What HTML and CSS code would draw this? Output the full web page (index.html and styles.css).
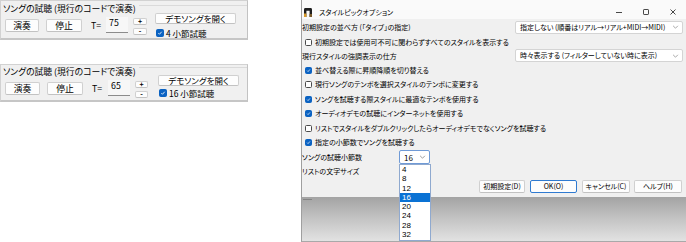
FILE: index.html
```html
<!DOCTYPE html>
<html lang="ja">
<head>
<meta charset="utf-8">
<title>スタイルピックオプション</title>
<link rel="stylesheet" href="styles.css">
</head>
<body>
<div class="left">
  <section class="panel p1">
    <div class="gtitle"><span>ソングの試聴 (現行のコードで演奏)</span><i class="gline"></i></div>
    <div class="controls">
      <button class="btn b-play">演奏</button>
      <button class="btn b-stop">停止</button>
      <span class="tlabel">T=</span>
      <span class="tempo">75</span>
      <div class="pm"><button class="btn pmb">+</button><button class="btn pmb">-</button></div>
      <div class="demo">
        <button class="btn b-demo">デモソングを開く</button>
        <label class="lchk"><i class="cb on"><svg viewBox="0 0 8 8"><path d="M1.8 4.2l1.5 1.5 3-3.4" fill="none" stroke="#fff" stroke-width="1.1"/></svg></i>4 小節試聴</label>
      </div>
    </div>
  </section>
  <section class="panel p2">
    <div class="gtitle"><span>ソングの試聴 (現行のコードで演奏)</span><i class="gline"></i></div>
    <div class="controls">
      <button class="btn b-play">演奏</button>
      <button class="btn b-stop">停止</button>
      <span class="tlabel">T=</span>
      <span class="tempo">65</span>
      <div class="pm"><button class="btn pmb">+</button><button class="btn pmb">-</button></div>
      <div class="demo">
        <button class="btn b-demo">デモソングを開く</button>
        <label class="lchk"><i class="cb on"><svg viewBox="0 0 8 8"><path d="M1.8 4.2l1.5 1.5 3-3.4" fill="none" stroke="#fff" stroke-width="1.1"/></svg></i>16 小節試聴</label>
      </div>
    </div>
  </section>
</div>

<div class="dlg">
  <div class="titlebar">
    <svg class="appicon" viewBox="0 0 8 9" width="8" height="9"><path d="M0 9V1.4Q0 0 1.4 0h5.2Q8 0 8 1.4V9H5.6V2.8H2.4V9z" fill="#1e1e1e"/><rect x="0" y="5.5" width="2.4" height="3.5" fill="#d89a2a"/><rect x="5.6" y="6" width="2.4" height="3" fill="#7a5a2a"/></svg>
    <span class="ttext">スタイルピックオプション</span>
    <div class="winctl">
      <span class="wc"><svg viewBox="0 0 8 8" width="8" height="8"><path d="M1 4.5h6" stroke="#333" stroke-width="0.9"/></svg></span>
      <span class="wc"><svg viewBox="0 0 8 8" width="8" height="8"><rect x="1.5" y="1.5" width="5" height="5" rx="0.6" fill="none" stroke="#333" stroke-width="0.9"/></svg></span>
      <span class="wc"><svg viewBox="0 0 8 8" width="8" height="8"><path d="M1.5 1.5l5 5M6.5 1.5l-5 5" stroke="#333" stroke-width="0.9"/></svg></span>
    </div>
  </div>
  <div class="body">
    <div class="row r1"><span>初期設定の並べ方 (「タイプ」の指定)</span><div class="sel"><span>指定しない (順番はリアル→リアル+MIDI→MIDI)</span><svg class="chev" viewBox="0 0 8 5" width="7" height="4"><path d="M1 1l3 3 3-3" fill="none" stroke="#777" stroke-width="0.8"/></svg></div></div>
    <div class="row r2"><i class="cb"></i><span>初期設定では使用可不可に関わらずすべてのスタイルを表示する</span></div>
    <div class="row r3"><span>現行スタイルの強調表示の仕方</span><div class="sel sel2"><span>時々表示する (フィルターしていない時に表示)</span><svg class="chev" viewBox="0 0 8 5" width="7" height="4"><path d="M1 1l3 3 3-3" fill="none" stroke="#777" stroke-width="0.8"/></svg></div></div>
    <div class="row r4"><i class="cb on"><svg viewBox="0 0 8 8"><path d="M1.8 4.2l1.5 1.5 3-3.4" fill="none" stroke="#fff" stroke-width="1.1"/></svg></i><span>並べ替える際に昇順降順を切り替える</span></div>
    <div class="row"><i class="cb"></i><span>現行ソングのテンポを選択スタイルのテンポに変更する</span></div>
    <div class="row"><i class="cb on"><svg viewBox="0 0 8 8"><path d="M1.8 4.2l1.5 1.5 3-3.4" fill="none" stroke="#fff" stroke-width="1.1"/></svg></i><span>ソングを試聴する際スタイルに最適なテンポを使用する</span></div>
    <div class="row"><i class="cb on"><svg viewBox="0 0 8 8"><path d="M1.8 4.2l1.5 1.5 3-3.4" fill="none" stroke="#fff" stroke-width="1.1"/></svg></i><span>オーディオデモの試聴にインターネットを使用する</span></div>
    <div class="row"><i class="cb"></i><span>リストでスタイルをダブルクリックしたらオーディオデモでなくソングを試聴する</span></div>
    <div class="row"><i class="cb on"><svg viewBox="0 0 8 8"><path d="M1.8 4.2l1.5 1.5 3-3.4" fill="none" stroke="#fff" stroke-width="1.1"/></svg></i><span>指定の小節数でソングを試聴する</span></div>
    <div class="row"><span class="lbl">ソングの試聴小節数</span><div class="combo"><span>16</span><svg class="chev" viewBox="0 0 8 5" width="7" height="4"><path d="M1 1l3 3 3-3" fill="none" stroke="#666" stroke-width="0.8"/></svg></div></div>
    <div class="row"><span>リストの文字サイズ</span></div>
    <div class="btns">
      <button class="btn db w46">初期設定(D)</button>
      <button class="btn db w47 def">OK(O)</button>
      <button class="btn db w48">キャンセル(C)</button>
      <button class="btn db w48">ヘルプ(H)</button>
    </div>
  </div>
  <div class="shade"><i class="dash"></i></div>
  <ul class="droplist">
    <li>4</li><li>8</li><li>12</li><li class="hl">16</li><li>20</li><li>24</li><li>28</li><li>32</li>
  </ul>
</div>
</body>
</html>
```

FILE: styles.css
```css
* { box-sizing: border-box; margin: 0; padding: 0; }
html, body { width: 686px; height: 242px; overflow: hidden; background: #fff; }
body {
  font-family: "Noto Sans CJK JP", "Noto Sans", sans-serif;
  font-feature-settings: "palt";
  color: #000;
  display: flex;
  align-items: flex-start;
}
button { font: inherit; color: inherit; background: none; border: none; }

/* ---------- left panels ---------- */
.left { width: 248px; display: flex; flex-direction: column; }
.panel {
  height: 40px;
  background: #f0f0f0;
  border: 1px solid #d2d2d2;
  border-right-color: #c2c2c2;
  border-bottom: 2px solid #c6c6c6;
  font-size: 8.8px;
}
.p2 { margin-top: 24px; height: 38px; }
.gtitle { display: flex; align-items: center; height: 14px; padding: 2px 0 0 2px; line-height: 12px; white-space: nowrap; }
.p2 .gtitle { height: 13px; padding-top: 0; }
.gline { flex: 1; height: 1px; background: #dadada; margin-left: 3px; align-self: flex-start; margin-top: 2px; }
.controls { display: flex; align-items: flex-start; padding-left: 4px; }
.btn {
  background: #fdfdfd;
  border: 1px solid #d0d0d0;
  border-bottom-color: #c2c2c2;
  border-radius: 2px;
  display: flex; align-items: center; justify-content: center;
  white-space: nowrap;
}
.b-play { width: 34px; height: 13px; margin-top: 4px; line-height: 11px; }
.b-stop { width: 36px; height: 13px; margin-top: 4px; margin-left: 7px; line-height: 11px; }
.tlabel { width: 15px; margin-left: 9px; margin-top: 4px; line-height: 13px; }
.tempo { width: 22px; height: 16px; margin-top: 2px; background: #f7f7f7; border-bottom: 1px solid #8c8c8c; padding: 1px 0 0 3px; line-height: 10px; }
.pm { width: 14px; margin-left: 5px; margin-top: 3px; display: flex; flex-direction: column; gap: 3px; }
.pmb { height: 7px; font-size: 7px; line-height: 5px; font-weight: 700; }
.demo { margin-left: 8px; margin-top: -2px; display: flex; flex-direction: column; align-items: flex-start; }
.b-demo { width: 81px; height: 11px; line-height: 9px; font-size: 8.5px; }
.lchk { display: flex; align-items: center; margin-top: 5px; margin-left: 1px; line-height: 8px; font-size: 8.5px; }
.lchk .cb { width: 8px; height: 8px; margin: 0 2px 0 0; }

.p2 .b-play { width: 35px; }
.p2 .tlabel { width: 16px; }
.p2 .pm { width: 13px; }
.p2 .demo { margin-left: 10px; margin-top: -3px; }
.p2 .lchk { margin-top: 3px; }

/* ---------- checkboxes ---------- */
.cb {
  display: inline-flex; flex: none;
  width: 7px; height: 7px;
  border: 1px solid #4a4a4a; border-radius: 1.5px;
  background: #fff;
  margin: 0 3px 0 3px;
}
.cb.on { background: #0a62c2; border-color: #0a62c2; }
.cb svg { width: 100%; height: 100%; display: block; }

/* ---------- dialog ---------- */
.dlg {
  position: relative;
  margin-left: 53px;
  width: 385px; height: 242px;
  border-left: 1px solid #9f9f9f;
  border-bottom: 1px solid #a9a9a9;
  display: flex; flex-direction: column;
  font-size: 7px;
}
.titlebar { height: 19px; flex: none; display: flex; align-items: center; padding: 5px 0 0 2px; background: #fafafa; }
.appicon { display: block; }
.ttext { margin-left: 7px; line-height: 8px; }
.winctl { margin-left: auto; display: flex; }
.wc { width: 27px; display: flex; justify-content: center; }
.wc svg { display: block; }

.body { height: 178px; flex: none; background: #f0f0f0; display: flex; flex-direction: column; }
.row { height: 14.5px; display: flex; align-items: center; white-space: nowrap; line-height: 9px; }
.r1 { height: 16px; }
.r2 { height: 15px; }
.r3 { height: 13.5px; }
.r4 { height: 14px; }
.sel {
  margin-left: auto; margin-right: 3px;
  width: 168px; height: 13px;
  background: #fff;
  border: 1px solid #d4d4d4; border-radius: 2px;
  display: flex; align-items: center; padding: 0 3px 0 4px;
}
.sel2 { margin-top: -2px; }
.chev { margin-left: auto; display: block; }
.lbl { width: 97px; }
.combo {
  width: 31px; height: 14px;
  background: #fff;
  border: 1px solid #6f9ad6; border-radius: 2px;
  display: flex; align-items: center; padding: 0 3px 0 4px;
  font-size: 8px;
}
.btns { height: 18px; display: flex; justify-content: flex-end; gap: 5px; padding: 1px 4px 0 0; }
.db { height: 13px; line-height: 11px; }
.w46 { width: 46px; }
.w47 { width: 47px; }
.w48 { width: 48px; }
.btns .w48:last-child { margin-left: -1px; }
.def { border-color: #2f7ad0; }

.shade { flex: 1; background: linear-gradient(to bottom, #a3a3a3, #c4c4c4 50%, #e2e2e2); padding: 2px 0 0 1px; }
.dash { display: block; width: 9px; height: 1px; background: #858585; }

.droplist {
  position: absolute; left: 97px; top: 164px;
  width: 32px; height: 77px;
  list-style: none;
  background: #fff;
  border: 1px solid #8fa9cf;
  font-family: "Liberation Sans", sans-serif;
  font-size: 8px;
}
.droplist li { height: 9.25px; line-height: 9.25px; padding-left: 2px; }
.droplist .hl { background: #0a72d4; color: #fff; }
```
